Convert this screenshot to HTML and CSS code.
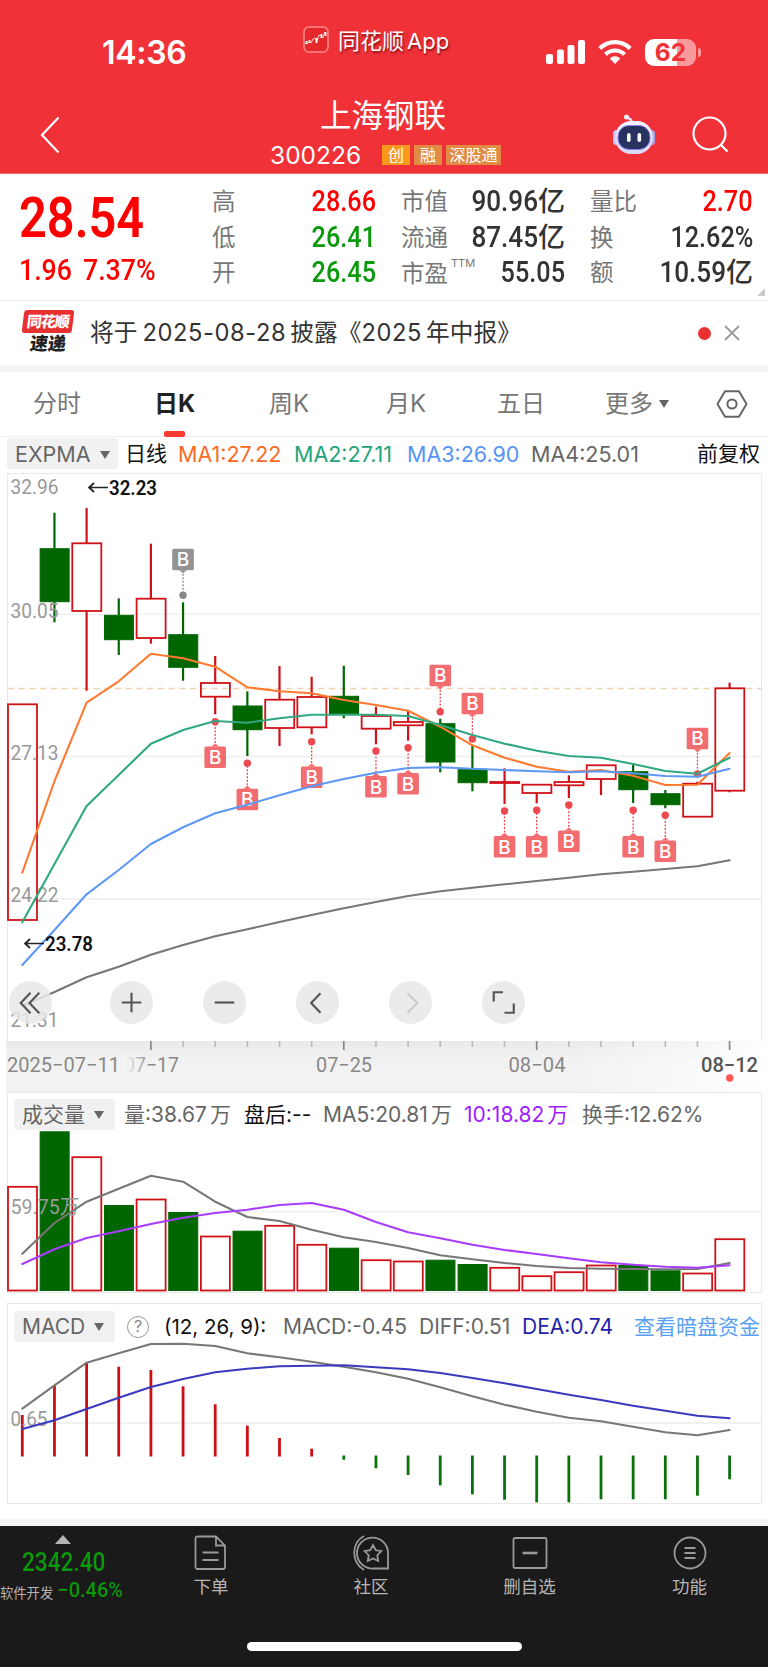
FILE: index.html
```html
<!DOCTYPE html>
<html lang="zh-CN">

<head>
  <meta charset="UTF-8">
  <meta name="viewport" content="width=device-width, initial-scale=1.0">
  <title>上海钢联 300226</title>
  <link rel="stylesheet" href="styles.css">
</head>

<body>

  <!-- red header -->
  <header class="header">
    <div class="statusBar">
      <div class="clock">14:36</div>
      <div class="appName">
        <svg width="26" height="27" viewBox="0 0 26 27" fill="none">
          <rect x="1" y="1" width="24" height="25" rx="5" fill="#e5282c" stroke="#f88a8a" stroke-width="1.6" />
          <path d="M2 17l2 1 2-2 2 1 2-4 2-1 2 3 2-6 2 1 2 2 2-6" stroke="#ffd5d0" stroke-width="1" />
          <path d="M3.500 15v3M6.500 14v3M13.500 12v5M18.500 8v4M22.500 6v4" stroke="#fff" stroke-width="1.8" />
        </svg>
        <span>同花顺<b>App</b></span>
      </div>
      <div class="phoneIcons">
        <svg width="40" height="26" viewBox="0 0 40 26" fill="#fff">
          <rect x="0" y="15" width="7" height="10" rx="2" />
          <rect x="11" y="10.500" width="7" height="14.500" rx="2" />
          <rect x="21.500" y="6" width="7" height="19" rx="2" />
          <rect x="32" y="1" width="7" height="24" rx="2" />
        </svg>
        <svg class="wifi" width="34" height="26" viewBox="0 0 34 26" fill="none" stroke="#fff" stroke-width="4.200">
          <path d="M1.800 9.500a21.500 21.500 0 0 1 30.400 0" />
          <path d="M7.500 15.400a13.500 13.500 0 0 1 19 0" />
          <path d="M17 25l-5.200-5.600a7.400 7.400 0 0 1 10.400 0z" fill="#fff" stroke="none" />
        </svg>
        <div class="battery"><span>62</span></div>
        <i class="batteryTip"></i>
      </div>
    </div>

    <div class="titleBar">
      <svg class="back" width="20" height="38" viewBox="0 0 20 38" fill="none" stroke="#fff" stroke-width="2.200">
        <path d="M18.500 1.500L2 19l16.500 17.500" />
      </svg>
      <div class="stock">
        <h1>上海钢联</h1>
        <div class="code">
          <span class="codeNum">300226</span>
          <i class="tag tagNew">创</i>
          <i class="tag">融</i>
          <i class="tag tagWide">深股通</i>
        </div>
      </div>
      <div class="titleIcons">
        <svg width="44" height="42" viewBox="0 0 44 42">
          <path d="M20 8c-1-4-4-3-5-5" stroke="#e6e3fa" stroke-width="2.500" fill="none" />
          <circle cx="14.500" cy="3" r="2.500" fill="#f5f3ff" />
          <rect x="1" y="16" width="7" height="15" rx="3.500" fill="#c9c5f4" />
          <rect x="36" y="16" width="7" height="15" rx="3.500" fill="#a9a4ee" />
          <rect x="3" y="7" width="38" height="33" rx="16" fill="#dcdaf8" />
          <rect x="5" y="7.500" width="34" height="26" rx="13" fill="#f6f4ff" />
          <rect x="6" y="11.500" width="32" height="24" rx="11" fill="#28325f" stroke="#8f7df0" stroke-width="1" />
          <rect x="15" y="19" width="3.600" height="9" rx="1.800" fill="#fff" />
          <rect x="25.500" y="19" width="3.600" height="9" rx="1.800" fill="#fff" />
        </svg>
        <svg width="37" height="37" viewBox="0 0 37 37" fill="none" stroke="#fff" stroke-width="2.200">
          <circle cx="17.500" cy="17.500" r="16" />
          <path d="M28.500 28.500l7 7" />
        </svg>
      </div>
    </div>
  </header>

  <!-- price and key figures -->
  <section class="quote">
    <div class="price">
      <div class="last"><span class="num">28.54</span></div>
      <div class="change"><span class="num">1.96</span><span class="num">7.37%</span></div>
    </div>
    <div class="figures">
      <div><label>高</label><span class="num up">28.66</span></div>
      <div><label>低</label><span class="num down">26.41</span></div>
      <div><label>开</label><span class="num down">26.45</span></div>
    </div>
    <div class="figures">
      <div><label>市值</label><span class="val"><span class="num">90.96</span>亿</span></div>
      <div><label>流通</label><span class="val"><span class="num">87.45</span>亿</span></div>
      <div><label class="low">市盈<sup>TTM</sup></label><span class="num">55.05</span></div>
    </div>
    <div class="figures">
      <div><label>量比</label><span class="num up">2.70</span></div>
      <div><label>换</label><span class="num">12.62%</span></div>
      <div><label>额</label><span class="val"><span class="num">10.59</span>亿</span></div>
    </div>
    <i class="corner"></i>
  </section>

  <!-- news -->
  <section class="news">
    <div class="newsLogo">
      <span class="logoTop">同花顺</span>
      <span class="logoBottom">速递</span>
    </div>
    <p>将于<i>2025-08-28</i>披露<b>《</b><i>2025</i>年中报》</p>
    <i class="dot"></i>
    <svg width="16" height="16" viewBox="0 0 16 16" stroke="#999" stroke-width="1.800">
      <path d="M1 1l14 14M15 1L1 15" />
    </svg>
  </section>

  <!-- period tabs -->
  <nav class="tabs">
    <a>分时</a>
    <a class="active">日K</a>
    <a>周K</a>
    <a>月K</a>
    <a>五日</a>
    <a>更多<i class="arrow"></i></a>
    <svg width="32" height="28" viewBox="0 0 32 28" fill="none" stroke="#666" stroke-width="2">
      <path d="M9 1.200h14l7.500 12.800L23 26.800H9L1.500 14z" stroke-linejoin="round" />
      <circle cx="16" cy="14" r="4.600" />
    </svg>
  </nav>

  <div class="legend maLegend">
    <button>EXPMA<i class="arrow"></i></button>
    <span class="black">日线</span>
    <span class="ma1">MA1:27.22</span>
    <span class="ma2">MA2:27.11</span>
    <span class="ma3">MA3:26.90</span>
    <span>MA4:25.01</span>
    <span class="black">前复权</span>
  </div>

  <!-- candles -->
  <section class="panel candlePanel">
    <svg id="candles" width="753" height="567" viewBox="8 474 753 567"></svg>
    <div class="zoomBar">
      <button><svg viewBox="0 0 44 44"><path d="M22 12L12 22.500 22 33M31 12L21 22.500 31 33" /></svg></button>
      <button><svg viewBox="0 0 44 44"><path d="M22 12v20M12 22h20" /></svg></button>
      <button><svg viewBox="0 0 44 44"><path d="M12 22h20" /></svg></button>
      <button><svg viewBox="0 0 44 44"><path d="M25 12.500L15.500 22.500 25 32.500" /></svg></button>
      <button class="off"><svg viewBox="0 0 44 44"><path d="M19 12.500L29 22.500 19 32.500" /></svg></button>
      <button><svg viewBox="0 0 44 44"><path d="M12 21v-9.500h9.500M23 32.500h9.500V23" /></svg></button>
    </div>
  </section>
  <svg id="axis" class="axis" width="768" height="51" viewBox="0 1041 768 51"></svg>

  <!-- volume -->
  <section class="panel">
    <div class="legend volLegend">
      <button>成交量<i class="arrow"></i></button>
      <span>量:38.67<em>万</em></span>
      <span class="black">盘后:--</span>
      <span>MA5:20.81<em>万</em></span>
      <span class="purple">10:18.82<em>万</em></span>
      <span>换手:12.62%</span>
    </div>
    <svg id="volume" width="753" height="161" viewBox="8 1131 753 161"></svg>
  </section>

  <!-- macd -->
  <section class="panel macdPanel">
    <div class="legend macdLegend">
      <button>MACD<i class="arrow"></i></button>
      <i class="help">?</i>
      <span class="black params">(12, 26, 9):</span>
      <span>MACD:-0.45</span>
      <span>DIFF:0.51</span>
      <span class="navy">DEA:0.74</span>
      <span class="link">查看暗盘资金</span>
    </div>
    <svg id="macd" width="753" height="160" viewBox="8 1343 753 160"></svg>
  </section>

  <!-- bottom bar -->
  <footer class="footer">
    <div class="footRow">
      <div class="sector">
        <i class="upArrow"></i>
        <div class="sectorNum"><span class="num">2342.40</span></div>
        <div class="sectorName">软件开发<span class="num">−0.46%</span></div>
      </div>
      <a>
        <svg viewBox="0 0 36 36"><path d="M2.500 3.500a2 2 0 0 1 2-2H23l9 9V32a2 2 0 0 1-2 2H4.500a2 2 0 0 1-2-2zM23 1.500v9h9M9.500 17.500h16M9.500 25h16" /></svg>
        下单
      </a>
      <a>
        <svg viewBox="0 0 36 36"><path d="M35 33.500H21A15.500 15.500 0 1 1 35 18zM11 1C-2 8-2 27 11 35" /><path d="M20 10l2.700 5.200 5.600.9-4 4.100.9 5.800-5.200-2.600-5.200 2.600.9-5.800-4-4.100 5.600-.9z" /></svg>
        社区
      </a>
      <a>
        <svg viewBox="0 0 36 36"><rect x="1.500" y="3" width="33" height="30" rx="1.500" /><path d="M10.500 18h15" stroke-width="2.600" /></svg>
        删自选
      </a>
      <a>
        <svg viewBox="0 0 36 36"><circle cx="18" cy="18" r="15.500" /><path d="M12.500 13h11M12.500 18h11M12.500 23h11" /></svg>
        功能
      </a>
    </div>
    <div class="homeBar"></div>
  </footer>

  <script src="chart.js"></script>
</body>

</html>
```

FILE: styles.css
```css
* {
  box-sizing: border-box;
}

body {
  margin: 0;
  width: 768px;
  height: 1667px;
  overflow: hidden;
  background-color: #fff;
  color: #333;
  font-family: Inter, "Noto Sans CJK SC", sans-serif;
}

svg {
  display: block;
}

i, em {
  font-style: normal;
}

button {
  border: none;
  padding: 0;
  font: inherit;
  color: inherit;
}

.num {
  display: inline-block;
  font-family: Roboto, "Noto Sans CJK SC", sans-serif;
  font-weight: 500;
  transform: scaleX(.87);
  transform-origin: right center;
}

.up {
  color: #fe0000;
}

.down {
  color: #0a990a;
}

/* header */
.header {
  height: 174px;
  background-color: #f03138;
  color: #fff;
  border-bottom: 1px solid #f4686c;
}

.statusBar {
  height: 92px;
  display: flex;
  align-items: flex-start;
}

.clock {
  width: 201px;
  margin: 33px 0 0 102px;
  font-size: 32px;
  line-height: 40px;
  font-weight: 600;
  letter-spacing: -.3px;
}

.appName {
  width: 243px;
  margin-top: 26px;
  display: flex;
  gap: 9px;
  font-size: 22px;
  line-height: 30px;
  text-shadow: 1px 2px 2px rgba(80, 0, 0, .6);
}

.appName b {
  margin-left: 3px;
  font-weight: 400;
}

.phoneIcons {
  display: flex;
  margin-top: 39px;
}

.wifi {
  margin: 0 13px 0 12px;
}

.battery {
  width: 51px;
  height: 27px;
  border-radius: 9px;
  background: linear-gradient(90deg, #fff 62%, #f8999b 62%);
  color: #f03138;
  font-size: 24.500px;
  line-height: 27px;
  font-weight: 700;
  text-align: center;
}

.batteryTip {
  width: 3px;
  height: 9px;
  margin: 9px 0 0 2px;
  border-radius: 0 3px 3px 0;
  background-color: #f8999b;
}

.titleBar {
  display: flex;
  height: 82px;
}

.back {
  margin: 24px 210px 0 40px;
}

.stock {
  width: 342px;
}

.stock h1 {
  margin: 2px 0 0 50px;
  font-size: 31.500px;
  line-height: 44px;
  font-weight: 400;
  white-space: nowrap;
}

.code {
  display: flex;
  align-items: center;
  margin-top: 2px;
  white-space: nowrap;
}

.codeNum {
  flex: none;
  width: 112px;
  font-size: 24.500px;
  line-height: 30px;
}

.tag {
  flex: none;
  width: 28px;
  height: 20px;
  margin-right: 4px;
  background-color: #e08c45;
  font-size: 16px;
  line-height: 20px;
  text-align: center;
}

.tagNew {
  background-color: #fa9a1c;
}

.tagWide {
  width: 55px;
}

.titleIcons {
  display: flex;
  gap: 36px;
  margin-top: 22px;
}

.titleIcons svg:last-child {
  margin-top: 2px;
}

/* quote */
.quote {
  position: relative;
  display: grid;
  grid-template-columns: 168px 164px 164px 163px;
  column-gap: 25px;
  height: 127px;
  padding-left: 19px;
  border-bottom: 1px solid #eee;
}

.price {
  color: #fe0000;
}

.price .num {
  transform-origin: left center;
}

.last {
  height: 50px;
  margin-top: 18px;
  font-size: 56px;
  line-height: 50px;
}

.last .num {
  font-weight: 600;
}

.change {
  display: flex;
  margin-top: 12px;
  font-size: 29px;
  line-height: 32px;
}

.change .num {
  transform: scaleX(.92);
}

.change .num:first-child {
  width: 64px;
}

.figures {
  padding-top: 9px;
  font-size: 29px;
}

.figures div {
  display: flex;
  justify-content: space-between;
  height: 35.700px;
  line-height: 36px;
  white-space: nowrap;
}

.figures label {
  padding-top: 1px;
  font-size: 23.500px;
  color: #777;
}

.figures .low {
  padding-top: 2px;
}

.figures sup {
  position: relative;
  top: -15px;
  margin-left: 3px;
  font-size: 11px;
  line-height: 0;
  vertical-align: baseline;
}

.val {
  font-size: 27px;
  font-weight: 500;
}

.val .num {
  font-size: 29px;
  transform: scaleX(.9);
}

.corner {
  position: absolute;
  right: 3px;
  bottom: 4px;
  border: 4.500px solid transparent;
  border-right-color: #ccc;
  border-bottom-color: #ccc;
}

/* news */
.news {
  display: flex;
  align-items: center;
  height: 71px;
  padding-left: 23px;
  border-bottom: 7px solid #f4f4f4;
}

.newsLogo {
  width: 67px;
  height: 46px;
}

.newsLogo span {
  display: block;
  width: 50px;
  font-weight: 900;
  text-align: center;
  transform: skewX(-7deg);
}

.logoTop {
  height: 23px;
  border-radius: 3px;
  background-color: #e93030;
  color: #fff;
  font-size: 15px;
  line-height: 23px;
  letter-spacing: -1px;
}

.logoBottom {
  color: #222;
  font-size: 18px;
  line-height: 22px;
}

.news p {
  width: 608px;
  margin: 0;
  font-size: 23.700px;
  line-height: 34px;
  white-space: nowrap;
}

.news p i {
  margin: 0 4px 0 5px;
  letter-spacing: .6px;
}

.news p b {
  font-weight: 400;
}

.news p b + i {
  margin-left: 0;
}

.dot {
  width: 13px;
  height: 13px;
  margin-right: 13px;
  border-radius: 50%;
  background-color: #e93030;
}

/* tabs */
.tabs {
  display: grid;
  grid-template-columns: 121px 115px 117px 111px 108px 111px 32px;
  align-items: center;
  height: 65px;
  padding-left: 33px;
  border-bottom: 1px solid #eee;
  font-size: 24px;
  color: #777;
}

.tabs a {
  position: relative;
  line-height: 62px;
}

.tabs .active {
  color: #222;
  font-weight: 700;
}

.tabs .active::after {
  content: "";
  position: absolute;
  left: 10px;
  bottom: -2px;
  width: 21px;
  height: 6px;
  border-radius: 2px;
  background-color: #fa3c32;
}

.arrow {
  display: inline-block;
  margin-left: 6px;
  border: 5.500px solid transparent;
  border-top: 8px solid #666;
  border-bottom: none;
  vertical-align: 4px;
}

/* legends */
.legend {
  display: grid;
  align-items: center;
  font-size: 21px;
  line-height: 28px;
  color: #666;
  white-space: nowrap;
}

.legend button {
  height: 31px;
  border-radius: 3px;
  background-color: #f1f1f1;
  text-align: left;
  padding-left: 8px;
}

.legend .arrow {
  margin-left: 9px;
  vertical-align: 3px;
}

.legend .black {
  color: #111;
}

.legend em {
  margin-left: 3px;
}

.maLegend {
  grid-template-columns: 118px 53px 116px 113px 124px 166px 64px;
  height: 36px;
  padding: 0 0 3px 7px;
  font-size: 21.500px;
}

.maLegend button {
  width: 111px;
}

.maLegend .black {
  font-size: 21px;
}

.ma1 { color: #fb6a1e; }
.ma2 { color: #1fa57a; }
.ma3 { color: #5694f5; }
.legend .purple { color: #a020ff; }
.legend .navy { color: #1f1fab; }
.legend .link { color: #5a9ff2; }

.volLegend {
  grid-template-columns: 110px 120px 79px 141px 118px 121px;
  height: 38px;
  margin-left: 6px;
  padding: 6px 0 1px;
}

.volLegend button,
.macdLegend button {
  width: 101px;
}

.macdLegend {
  grid-template-columns: 113px 37px 119px 136px 103px 112px 124px;
  height: 39px;
  margin-left: 6px;
  padding: 7px 0 1px;
}

.macdLegend .params {
  font-size: 20.500px;
}

.help {
  width: 22px;
  height: 22px;
  border: 1.500px solid #999;
  border-radius: 50%;
  color: #888;
  font-size: 16px;
  line-height: 19px;
  text-align: center;
}

/* panels */
.panel {
  position: relative;
  width: 755px;
  margin-left: 7px;
  border: 1px solid #e9e9e9;
}

.panel svg {
  overflow: visible;
}

.macdPanel {
  margin-top: 10px;
}

.candlePanel {
  border-bottom: none;
}

.zoomBar {
  position: absolute;
  left: 1px;
  bottom: 17.500px;
  display: flex;
  gap: 50px;
}

.zoomBar button {
  width: 43px;
  height: 43px;
  border-radius: 50%;
  background-color: rgba(232, 232, 232, .85);
}

.zoomBar button:first-child {
  margin-right: 8px;
}

.zoomBar svg {
  fill: none;
  stroke: #555;
  stroke-width: 2.200;
}

.zoomBar .off svg {
  stroke: #ccc;
}

/* chart pieces */
.grid { stroke: #f2f2f2; stroke-width: 1.800; }
.rise { fill: #fff; stroke: #d01218; stroke-width: 1.800; }
.fall { fill: #006600; stroke: #006600; }
.wickRise { stroke: #d01218; stroke-width: 2.200; }
.wickFall { stroke: #006600; stroke-width: 2.200; }
.line { fill: none; stroke-width: 2.100; stroke-linejoin: round; stroke-linecap: round; }

.scale {
  fill: #999;
  font-family: Roboto, "Noto Sans CJK SC", sans-serif;
  font-size: 20px;
}

.peak {
  fill: #111;
  font-family: Roboto, sans-serif;
  font-size: 20px;
  font-weight: 600;
}

.date {
  fill: #888;
  font-family: Roboto, sans-serif;
  font-size: 20.500px;
}

.dateNow {
  fill: #555;
  font-weight: 500;
}

.mark {
  fill: #fff;
  font-size: 19px;
  font-weight: 500;
  text-anchor: middle;
}

/* footer */
.footer {
  margin-top: 15px;
  border-top: 7px solid #f4f4f4;
  height: 148px;
  background-color: #1a1a1a;
  color: #b5b5b5;
}

.footRow {
  display: grid;
  grid-template-columns: 123px 176px 144px 173px 147px;
  height: 116px;
}

.footRow a {
  display: flex;
  flex-direction: column;
  align-items: center;
  gap: 3px;
  padding-top: 9px;
  font-size: 17.500px;
  line-height: 26px;
}

.footRow svg {
  width: 36px;
  height: 36px;
  fill: none;
  stroke: #999;
  stroke-width: 1.800;
}

.upArrow {
  display: block;
  width: 16px;
  margin: 9px 0 0 55px;
  border: 8px solid transparent;
  border-bottom: 9px solid #b5b5b5;
  border-top: none;
}

.sectorNum {
  height: 28px;
  margin: 4px 0 0 22px;
  color: #0a990a;
  font-size: 26px;
  line-height: 28px;
}

.sectorNum .num {
  transform-origin: left center;
}

.sectorName {
  display: flex;
  justify-content: space-between;
  margin-top: 3px;
  font-size: 13.300px;
  line-height: 28px;
  white-space: nowrap;
}

.sectorName .num {
  margin-top: -3px;
  color: #0a990a;
  font-size: 21px;
  transform: scaleX(.95);
}

.homeBar {
  width: 275px;
  height: 9px;
  margin-left: 247px;
  border-radius: 5px;
  background-color: #fff;
}
```

FILE: chart.js
```js
// every chart shares the same 23 trading days
const START = 22.3;
const STEP = 32.15;
const x = i => START + STEP * i;

// [open/close top, bottom, wick top, wick bottom, rise?]
const candles = [
  [704.3, 920, 704.3, 920, 1],
  [548.7, 601.7, 512.7, 622.3, 0],
  [543.3, 611, 508, 690.7, 1],
  [615.3, 639.7, 598.3, 655, 0],
  [598.7, 638, 543.7, 643.7, 1],
  [634.7, 667.3, 602.3, 680.7, 0],
  [683, 696.7, 656, 714.3, 1],
  [706, 729.7, 691.3, 756, 0],
  [699.7, 728, 666, 746, 1],
  [697, 727.3, 676.7, 734.3, 1],
  [696.3, 713.7, 665.7, 718.3, 0],
  [716, 728.7, 706.7, 744.3, 1],
  [722, 725.3, 710.7, 740.7, 1],
  [723.7, 762, 718.7, 772.3, 0],
  [769.3, 782.7, 745.3, 791.3, 0],
  [782, 783, 768.3, 804, 1],
  [784.7, 793, 784.7, 803.3, 1],
  [782, 785.3, 775.3, 798, 1],
  [765.3, 779, 765.3, 795, 1],
  [771.7, 789.7, 763.3, 803, 0],
  [793.7, 804.7, 790, 808.3, 0],
  [783.7, 816.7, 781.7, 816.7, 1],
  [688.3, 790.7, 682.7, 792.3, 1]
];

const ma1 = [872.7, 781, 702.7, 681.3, 653.7, 658.3, 666.7, 687.3, 691.3, 693.3, 700, 705, 710.7, 726.7, 745.3, 757.7, 766.7, 771.7, 770, 775.7, 785, 784.7, 753];
const ma2 = [922.3, 864, 806, 775, 743.7, 730, 721, 722.7, 718.3, 714.7, 714.7, 714.7, 716, 725, 735, 743.7, 750.7, 756, 757.7, 764, 771, 773.7, 757.7];
const ma3 = [965, 930, 894.3, 870, 844, 827.3, 813.3, 804.7, 795.3, 786.3, 779, 772.7, 768, 767.3, 768.7, 770, 771.3, 772.3, 771.3, 773.3, 776, 776.7, 768.7];
const ma4 = [1006, 992, 977.3, 966.7, 954.7, 945, 936.3, 929.3, 922, 915, 908.3, 902, 896, 891.3, 887.7, 884.3, 881, 877.7, 874.3, 871.7, 869, 866.3, 860.3];

// [day, dot y, box top, grey?]
const marks = [
  [5, 595.3, 548.7, 1], [6, 721.7, 746.5], [7, 763.3, 788.7], [9, 741.7, 766.5],
  [11, 751, 776], [12, 747.7, 773], [13, 711.7, 664.7], [14, 739, 692.7],
  [15, 811, 836], [16, 810.3, 836], [17, 805, 830.5], [19, 810.3, 836],
  [20, 815.3, 840.5], [21, 774, 727.7]
];

const volTop = [1186.3, 1131.3, 1156.7, 1205, 1199, 1212, 1236, 1230.7, 1225.3, 1244.3, 1247.7, 1259.7, 1261, 1259.7, 1264, 1267.3, 1275.7, 1271.7, 1265, 1265, 1270.3, 1273, 1238.7];
const vol5 = [1253.7, 1223, 1201.7, 1188.7, 1175.7, 1181.7, 1201.7, 1217, 1221, 1229.7, 1237.3, 1242, 1248, 1255.3, 1259.3, 1263, 1266, 1268, 1268.7, 1269, 1269.3, 1269, 1263];
const vol10 = [1264, 1249.3, 1238, 1231.3, 1224, 1217.7, 1213, 1209.7, 1205, 1203, 1209.7, 1222, 1232.3, 1238.3, 1244.7, 1250, 1254, 1258.3, 1262.3, 1264.7, 1266.7, 1267.7, 1265.3];

const hist = [1415, 1385.3, 1362.7, 1366.7, 1370, 1386.3, 1404.3, 1425.7, 1438, 1448.7, 1459.7, 1468.3, 1475, 1485.3, 1494.3, 1499.7, 1502.3, 1502.3, 1499.3, 1499.3, 1499.3, 1495.7, 1479.3];
const diff = [1408.7, 1385.3, 1362.7, 1353.3, 1344, 1343.7, 1346, 1353.3, 1357.3, 1361.7, 1366.7, 1372.3, 1378.7, 1387.3, 1396.3, 1404.7, 1411.7, 1417.7, 1421.3, 1426.7, 1432.3, 1435.3, 1430];
const dea = [1429, 1420.3, 1409, 1397.7, 1387, 1379, 1372.3, 1368.7, 1366.3, 1365.7, 1365.3, 1367.3, 1369.3, 1373, 1378, 1383.3, 1389, 1394.7, 1400, 1405.7, 1410.7, 1415.7, 1418.3];

function polyline(data, color) {
  const points = data.map((y, i) => `${x(i).toFixed(1)},${y}`).join(' ');
  return `<polyline class="line" stroke="${color}" points="${points}" />`;
}

function vline(i, y1, y2, cls) {
  return `<line class="${cls}" x1="${x(i)}" x2="${x(i)}" y1="${y1}" y2="${y2}" />`;
}

function grid(y) {
  return `<line class="grid" x1="8" x2="761" y1="${y}" y2="${y}" />`;
}

function label(str, left, y, width, cls) {
  return `<text class="${cls}" x="${left}" y="${y}" textLength="${width}" lengthAdjust="spacingAndGlyphs">${str}</text>`;
}

function bar(i, top, bottom, rise) {
  return `<rect class="${rise ? 'rise' : 'fall'}" x="${x(i) - 14.3}" y="${top}" width="29" height="${bottom - top}" />`;
}

function mark([i, dot, top, grey]) {
  const cx = x(i);
  const above = top < dot;
  const edge = above ? top + 21.5 : top;
  const tip = above ? 3 : -3;
  const box = grey ? '#939393' : '#f16d70';
  const dark = grey ? '#888' : '#ec4a50';
  return `<line x1="${cx}" x2="${cx}" y1="${edge}" y2="${dot}" stroke="${dark}" stroke-width="1.3" stroke-dasharray="2 1.5" />
    <circle cx="${cx}" cy="${dot}" r="3.7" fill="${dark}" />
    <path d="M${cx - 4} ${edge}h8l-4 ${tip}z" fill="${box}" />
    <rect x="${cx - 10.8}" y="${top}" width="21.6" height="21.5" rx="1.500" fill="${box}" />
    <text class="mark" x="${cx}" y="${top + 17.7}">B</text>`;
}

function peak(str, left, y) {
  return `<path d="M${left + 20} ${y - 7.5}h-19M${left + 6} ${y - 12}l-5 4.500 5 4.500" fill="none" stroke="#222" stroke-width="1.7" />`
    + label(str, left + 21, y, 48, 'peak');
}

// candles
let out = [614.3, 756.5, 899].map(grid).join('');
out += '<line x1="8" x2="761" y1="688.5" y2="688.5" stroke="#f0d3ae" stroke-width="1.500" stroke-dasharray="6 4.700" />';
candles.forEach(([top, bottom, high, low, rise], i) => {
  const wick = rise ? 'wickRise' : 'wickFall';
  out += vline(i, high, top, wick) + vline(i, bottom, low, wick);
  // body stays hollow so the price line shows through
  out += bar(i, top, bottom, rise).replace('class="rise"', 'class="rise" fill-opacity="0"');
});
out += marks.map(mark).join('');
out += [['32.96', 493.5], ['30.05', 617.5], ['27.13', 760], ['24.22', 902], ['21.31', 1026.500]]
  .map(([s, y]) => label(s, 10.5, y, 48, 'scale')).join('');
out += polyline(ma1, '#ff7a30') + polyline(ma2, '#2fa883') + polyline(ma3, '#5e98f7') + polyline(ma4, '#777');
out += peak('32.23', 88, 495) + peak('23.78', 24, 951);
document.getElementById('candles').innerHTML = out;

// date axis
out = `<defs>
    <linearGradient id="fade"><stop offset=".75" stop-color="#f2f2f2" /><stop offset="1" stop-color="#fff" /></linearGradient>
    <linearGradient id="shade" x2="0" y2="1"><stop stop-color="#e6e6e6" stop-opacity=".8" /><stop offset=".5" stop-color="#f2f2f2" stop-opacity="0" /></linearGradient>
    <linearGradient id="textFade"><stop offset=".2" stop-color="#f2f2f2" /><stop offset="1" stop-color="#f2f2f2" stop-opacity="0" /></linearGradient>
    <linearGradient id="shadeMask"><stop offset=".7" stop-color="#fff" /><stop offset="1" stop-color="#000" /></linearGradient>
    <mask id="mask"><rect x="6" y="1041" width="762" height="51" fill="url(#shadeMask)" /></mask>
  </defs>
  <rect x="6" y="1041" width="762" height="51" fill="url(#fade)" />
  <rect x="6" y="1041" width="762" height="51" fill="url(#shade)" mask="url(#mask)" />`;
for (let i = 4; i < 23; i++) {
  const major = (i - 4) % 6 === 0;
  out += `<line x1="${x(i)}" x2="${x(i)}" y1="1041" y2="${major ? 1050 : 1047}" stroke="${major ? '#888' : '#bbb'}" stroke-width="1.7" />`;
}
out += label('07−17', 124, 1072, 55, 'date');
out += '<rect x="120" y="1055" width="30" height="20" fill="url(#textFade)" />';
out += label('2025−07−11', 7, 1072, 113, 'date');
out += label('07−25', 316, 1072, 56, 'date');
out += label('08−04', 508.5, 1072, 57, 'date');
out += label('08−12', 701, 1072, 57, 'date dateNow');
out += '<circle cx="729.700" cy="1078" r="3.700" fill="#f55" />';
document.getElementById('axis').innerHTML = out;

// volume
out = grid(1211.7);
volTop.forEach((top, i) => {
  out += bar(i, top + .5, 1290.5, candles[i][4]);
});
out += label('59.75万', 10.5, 1214, 69, 'scale');
out += polyline(vol5, '#777') + polyline(vol10, '#a83cff');
document.getElementById('volume').innerHTML = out;

// macd
out = grid(1423);
hist.forEach((y, i) => {
  out += `<line x1="${x(i)}" x2="${x(i)}" y1="${y < 1456 ? 1456.5 : 1455.5}" y2="${y}" stroke="${y < 1456 ? '#cc0f14' : '#0a720a'}" stroke-width="2.800" />`;
});
out += label('0.65', 10.5, 1425.5, 37, 'scale');
out += polyline(diff, '#777') + polyline(dea, '#3a3abf');
document.getElementById('macd').innerHTML = out;
```
